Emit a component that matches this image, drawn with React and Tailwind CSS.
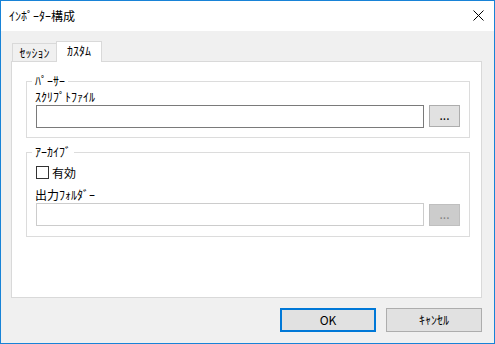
import React from "react";

const font = "font-['Noto_Sans_CJK_JP','Noto_Sans_CJK_SC',sans-serif]";

function GroupBox({ title, children, className = "" }) {
  return (
    <fieldset className={`border border-[#dcdcdc] mx-[14px] mr-[11px] ${className}`}>
      <legend className="ml-[5px] px-[3px] h-[12px] leading-[12px] text-[12px] text-black">{title}</legend>
      <div className="px-[9px]">{children}</div>
    </fieldset>
  );
}

export default function App() {
  return (
    <div className={`${font} w-[495px] h-[344px] border border-[#1883d7] bg-[#f0f0f0] flex flex-col text-[12px] leading-[12px] text-black`}>
      {/* title bar */}
      <div className="h-[30px] bg-white flex items-center justify-between pl-[8px] pr-[10px] shrink-0">
        <span>ｲﾝﾎﾟｰﾀｰ構成</span>
        <svg width="11" height="11" viewBox="0 0 11 11" className="mt-[-1px]">
          <path d="M0.5 0.5 L10.5 10.5 M10.5 0.5 L0.5 10.5" stroke="#000" strokeWidth="1" />
        </svg>
      </div>

      {/* body */}
      <div className="flex-1 flex flex-col pl-[10px] pr-[12px] pt-[10px]">
        {/* tabs */}
        <div className="flex items-end h-[20px]">
          <div className="ml-px w-[44px] h-[18px] border-l border-t border-[#d9d9d9] bg-[#f0f0f0] flex items-center justify-center">
            ｾｯｼｮﾝ
          </div>
          <div className="relative z-10 -mb-px w-[46px] h-[21px] border-x border-t border-[#d9d9d9] bg-white flex items-center justify-center pb-[2px]">
            ｶｽﾀﾑ
          </div>
        </div>

        {/* panel */}
        <div className="h-[237px] border border-[#d9d9d9] bg-white pt-[13px]">
          <GroupBox title="ﾊﾟｰｻｰ" className="pb-[9px]">
            <div className="mt-[4px] h-[12px] -ml-px">ｽｸﾘﾌﾟﾄﾌｧｲﾙ</div>
            <div className="mt-[2px] flex items-start gap-[5px]">
              <div className="flex-1 h-[23px] border border-[#7a7a7a] bg-white" />
              <div className="w-[31px] h-[22px] border border-[#adadad] bg-[#e1e1e1] flex items-center justify-center pb-[2px]">
                ...
              </div>
            </div>
          </GroupBox>

          <GroupBox title="ｱｰｶｲﾌﾞ" className="mt-[8px] pb-[10px]">
            <div className="mt-[8px] flex items-center h-[13px]">
              <div className="w-[13px] h-[13px] border border-[#333333] bg-white" />
              <span className="ml-[3px]">有効</span>
            </div>
            <div className="mt-[10px] h-[12px] -ml-px">出力ﾌｫﾙﾀﾞｰ</div>
            <div className="mt-[2px] flex items-start gap-[5px]">
              <div className="flex-1 h-[23px] border border-[#cccccc] bg-white" />
              <div className="mt-px w-[31px] h-[22px] border border-[#bfbfbf] bg-[#cccccc] flex items-center justify-center text-[#838383] pb-[2px]">
                ...
              </div>
            </div>
          </GroupBox>
        </div>

        {/* buttons */}
        <div className="mt-[10px] flex justify-end gap-[10px]">
          <button className="w-[96px] h-[24px] border-2 border-[#0078d7] bg-[#e1e1e1] flex items-center justify-center">
            OK
          </button>
          <button className="w-[96px] h-[24px] border border-[#adadad] bg-[#e1e1e1] flex items-center justify-center">
            ｷｬﾝｾﾙ
          </button>
        </div>
      </div>
    </div>
  );
}
